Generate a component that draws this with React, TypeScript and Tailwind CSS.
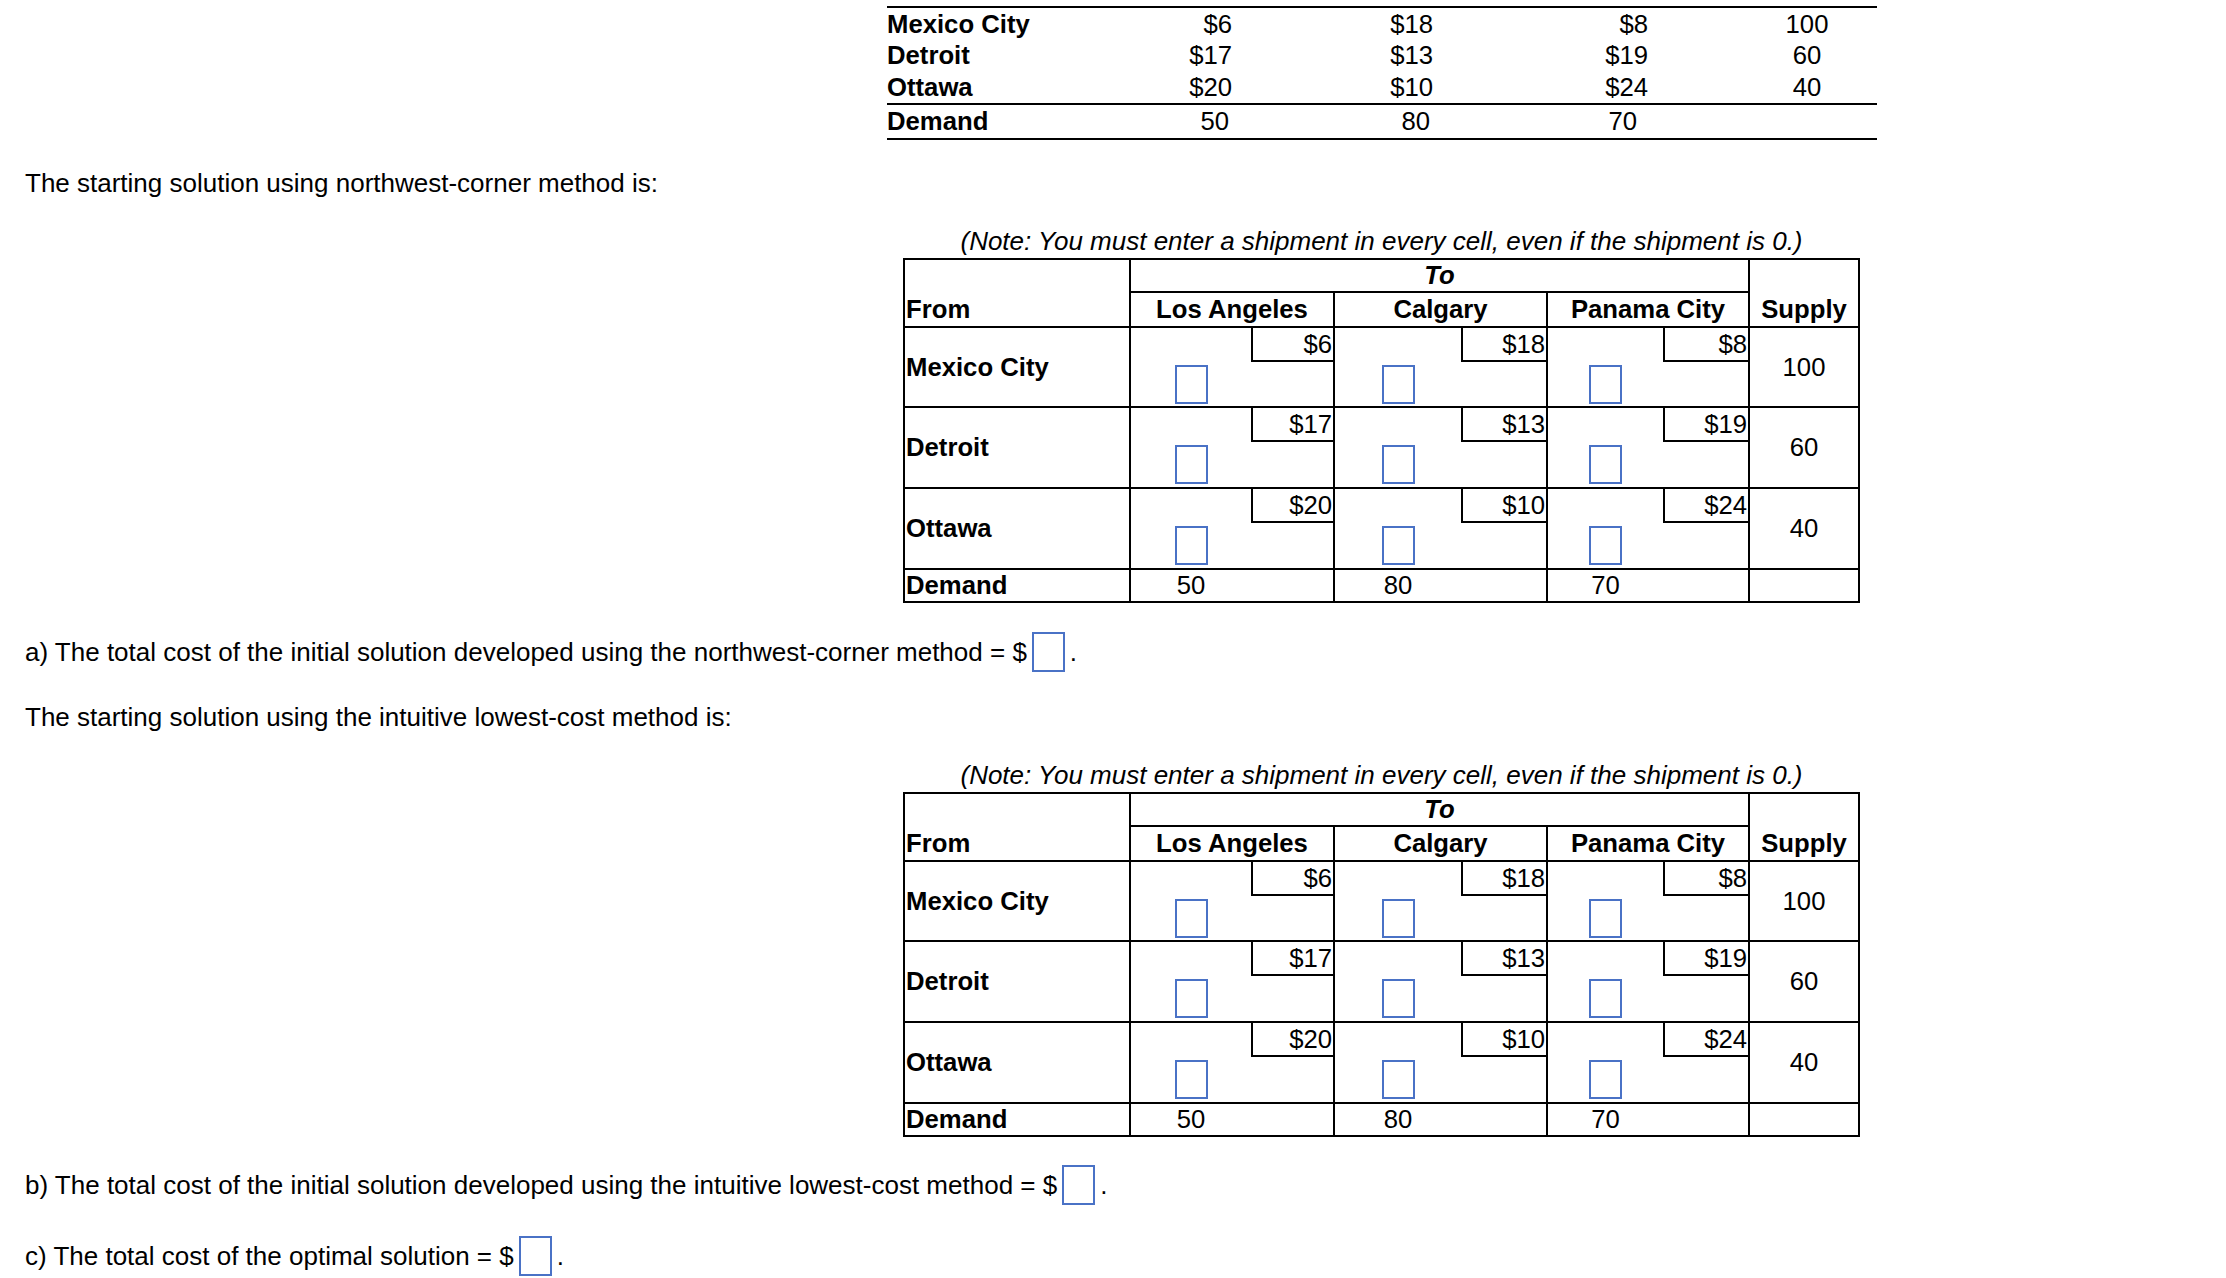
import React from "react";

const rows = ["Mexico City", "Detroit", "Ottawa"];
const prices = [
  ["$6", "$18", "$8"],
  ["$17", "$13", "$19"],
  ["$20", "$10", "$24"],
];
const supply = ["100", "60", "40"];
const demand = ["50", "80", "70"];
const priceW = ["w-[82px]", "w-[85px]", "w-[85px]"];

function InputBox({ tall }: { tall?: boolean }) {
  return (
    <div
      className={
        "w-[33px] border-2 border-[#4a72c6] bg-white " + (tall ? "h-[40px]" : "h-[39px]")
      }
    />
  );
}

function TopTable() {
  const cost = (i: number) => prices[i];
  return (
    <div className="ml-[887px] mt-[6px] w-[990px] border-t-2 border-b-2 border-black text-[25.7px]">
      {rows.map((r, i) => (
        <div
          key={r}
          className={
            "grid grid-cols-[197px_148px_201px_215px_89px_140px] " +
            (i === 1 ? "h-[31px] leading-[31px]" : "h-[32px] leading-[32px]")
          }
        >
          <div className="font-bold">{r}</div>
          <div className="text-right">{cost(i)[0]}</div>
          <div className="text-right">{cost(i)[1]}</div>
          <div className="text-right">{cost(i)[2]}</div>
          <div />
          <div className="text-center">{supply[i]}</div>
        </div>
      ))}
      <div className="grid h-[35px] grid-cols-[197px_148px_201px_215px_89px_140px] border-t-2 border-black leading-[33px]">
        <div className="font-bold">Demand</div>
        <div className="pr-[3px] text-right">50</div>
        <div className="pr-[3px] text-right">80</div>
        <div className="pr-[11px] text-right">70</div>
        <div />
        <div />
      </div>
    </div>
  );
}

function TransTable() {
  return (
    <div className="ml-[903px] w-[957px] text-[25.7px]">
      <div className="h-[30px] whitespace-nowrap text-center text-[26px] italic leading-[30px]">
        (Note: You must enter a shipment in every cell, even if the shipment is 0.)
      </div>
      <div className="mt-[2px] grid grid-cols-[224px_202px_211px_200px_108px] grid-rows-[31px_33px_78px_79px_79px_31px] gap-[2px] bg-black p-[2px]">
        <div className="row-span-2 flex items-end bg-white pl-[1px] font-bold leading-[33px]">
          From
        </div>
        <div className="col-span-3 flex items-center justify-center bg-white font-bold italic leading-[31px]">
          To
        </div>
        <div className="row-span-2 flex items-end justify-center bg-white font-bold leading-[33px]">
          Supply
        </div>
        <div className="flex items-center justify-center bg-white font-bold leading-[33px]">
          Los Angeles
        </div>
        <div className="flex items-center justify-center bg-white font-bold leading-[33px]">
          Calgary
        </div>
        <div className="flex items-center justify-center bg-white font-bold leading-[33px]">
          Panama City
        </div>
        {rows.map((r, i) => (
          <React.Fragment key={r}>
            <div className="flex items-center bg-white pl-[1px] font-bold">{r}</div>
            {prices[i].map((p, j) => (
              <div key={j} className="flex flex-col bg-white">
                <div className="flex h-[34px] justify-end">
                  <div
                    className={
                      priceW[j] +
                      " h-[34px] border-b-2 border-l-2 border-black pr-[1px] text-right leading-[32px]"
                    }
                  >
                    {p}
                  </div>
                </div>
                <div className="flex flex-1">
                  <div className="flex flex-1 items-center justify-center">
                    <InputBox />
                  </div>
                  <div className={priceW[j]} />
                </div>
              </div>
            ))}
            <div className="flex items-center justify-center bg-white">{supply[i]}</div>
          </React.Fragment>
        ))}
        <div className="flex items-center bg-white pl-[1px] font-bold leading-[31px]">Demand</div>
        {demand.map((d, j) => (
          <div key={j} className="flex bg-white leading-[31px]">
            <div className="flex flex-1 items-center justify-center">{d}</div>
            <div className={priceW[j]} />
          </div>
        ))}
        <div className="bg-white" />
      </div>
    </div>
  );
}

function AnswerLine({ text }: { text: string }) {
  return (
    <div className="flex h-[40px] items-center pl-[25px] text-[26px] leading-[30px]">
      <span className="whitespace-nowrap">{text}</span>
      <div className="ml-[5px]">
        <InputBox tall />
      </div>
      <span className="ml-[5px]">.</span>
    </div>
  );
}

export default function App() {
  return (
    <div className="h-[1278px] w-[2226px] overflow-hidden bg-white text-black font-['Liberation_Sans',Arial,Helvetica,sans-serif]">
      <div className="pt-px">
        <div className="-mt-px">
          <TopTable />
        </div>
      </div>
      <p className="mt-[28px] h-[30px] pl-[25px] text-[26px] leading-[30px]">
        The starting solution using northwest-corner method is:
      </p>
      <div className="mt-[28px]">
        <TransTable />
      </div>
      <div className="mt-[29px]">
        <AnswerLine text="a) The total cost of the initial solution developed using the northwest-corner method = $" />
      </div>
      <p className="mt-[30px] h-[30px] pl-[25px] text-[26px] leading-[30px]">
        The starting solution using the intuitive lowest-cost method is:
      </p>
      <div className="mt-[28px]">
        <TransTable />
      </div>
      <div className="mt-[28px]">
        <AnswerLine text="b) The total cost of the initial solution developed using the intuitive lowest-cost method = $" />
      </div>
      <div className="mt-[31px]">
        <AnswerLine text="c) The total cost of the optimal solution = $" />
      </div>
    </div>
  );
}
